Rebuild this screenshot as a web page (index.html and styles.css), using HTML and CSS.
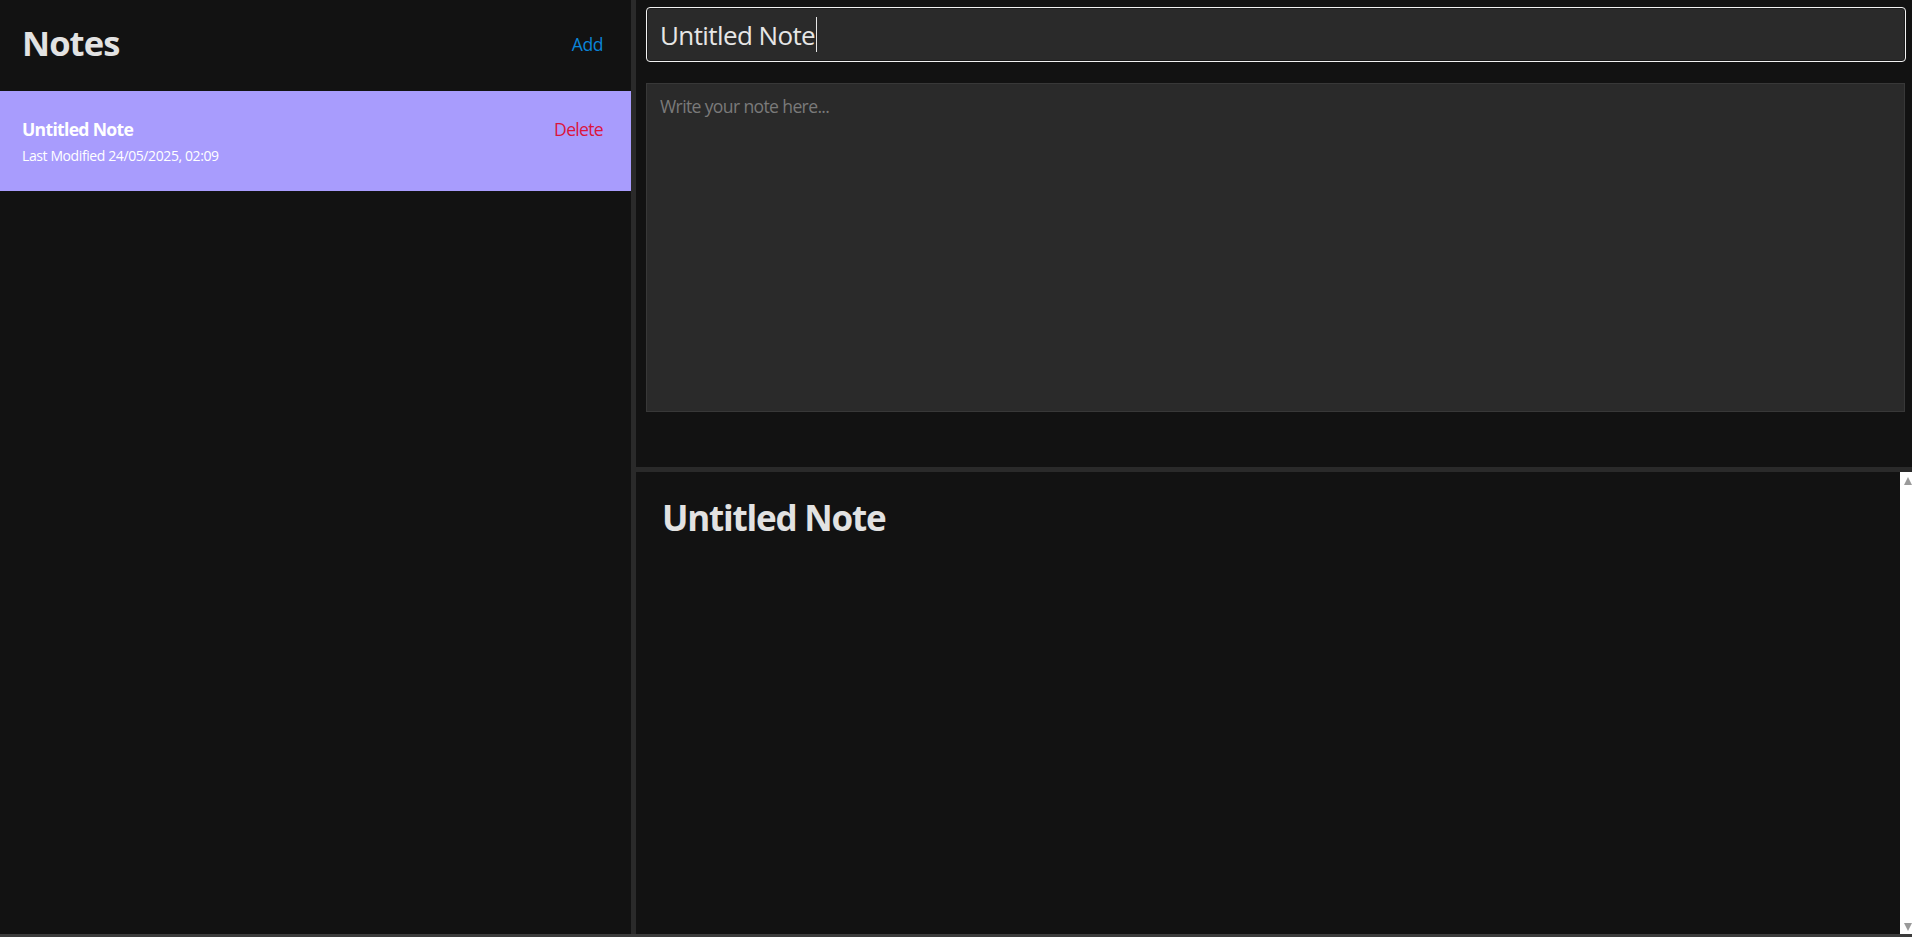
FILE: index.html
```html
<!DOCTYPE html>
<html lang="en">
<head>
<meta charset="utf-8">
<title>Notes</title>
<link rel="stylesheet" href="styles.css">
</head>
<body>
<div class="app">
  <aside class="sidebar">
    <header class="sidebar-header">
      <h1 class="sidebar-title">Notes</h1>
      <button class="add-btn" type="button">Add</button>
    </header>
    <ul class="note-list">
      <li class="note-item active">
        <div class="note-info">
          <strong class="note-title">Untitled Note</strong>
          <small class="note-meta">Last Modified 24/05/2025, 02:09</small>
        </div>
        <button class="delete-btn" type="button">Delete</button>
      </li>
    </ul>
  </aside>
  <main class="main">
    <section class="editor">
      <div class="title-field" role="textbox" aria-label="Note title">Untitled Note<span class="caret"></span></div>
      <textarea class="body-field" placeholder="Write your note here..."></textarea>
    </section>
    <section class="preview">
      <div class="preview-content">
        <h1 class="preview-title">Untitled Note</h1>
      </div>
      <div class="scrollbar">
        <span class="arrow-up"></span>
        <span class="arrow-down"></span>
      </div>
    </section>
  </main>
</div>
</body>
</html>
```
FILE: styles.css
```css
* {
  box-sizing: border-box;
}

html,
body {
  margin: 0;
  height: 100%;
}

body {
  background: #121212;
  color: #e0e0e0;
  font-family: "Open Sans", "Noto Sans", sans-serif;
  overflow: hidden;
}

.app {
  display: flex;
  height: 100vh;
  border-bottom: 3px solid #3c3c3c;
}

/* Sidebar */
.sidebar {
  width: 636px;
  flex-shrink: 0;
  border-right: 5px solid #2a2a2a;
  display: flex;
  flex-direction: column;
}

.sidebar-header {
  height: 91px;
  display: flex;
  justify-content: space-between;
  align-items: flex-start;
  padding: 26px 28px 0 22px;
}

.sidebar-title {
  margin: 0;
  font-size: 34.5px;
  line-height: 34px;
  font-weight: 700;
  color: #e2e2e2;
  letter-spacing: -0.9px;
}

.add-btn,
.delete-btn {
  background: none;
  border: none;
  padding: 0;
  font-family: inherit;
  font-size: 17.6px;
  line-height: 22px;
  cursor: pointer;
  letter-spacing: -0.5px;
}

.add-btn {
  color: #0a84d8;
  margin-top: 7px;
}

.note-list {
  list-style: none;
  margin: 0;
  padding: 0;
}

.note-item {
  display: flex;
  justify-content: space-between;
  align-items: flex-start;
  padding: 27px 28px 26px 22px;
  height: 100px;
}

.note-item.active {
  background: #a89cfd;
}

.note-info {
  display: flex;
  flex-direction: column;
}

.note-title {
  font-size: 17.6px;
  line-height: 22px;
  font-weight: 700;
  color: #ffffff;
  letter-spacing: -0.7px;
}

.note-meta {
  margin-top: 7px;
  font-size: 14px;
  line-height: 18px;
  color: #ffffff;
  letter-spacing: -0.4px;
}

.delete-btn {
  color: #dc143c;
  letter-spacing: -0.7px;
}

/* Main */
.main {
  flex: 1;
  display: flex;
  flex-direction: column;
  min-width: 0;
}

.editor {
  height: 467px;
  flex-shrink: 0;
  display: flex;
  flex-direction: column;
  padding: 7px 6px 0 10px;
}

.title-field {
  height: 55px;
  display: flex;
  align-items: center;
  padding: 0 13px;
  background: #2a2a2a;
  border: 1px solid #f2f2f2;
  border-radius: 4px;
  box-shadow: inset 0 0 0 1px #1b1b1b;
  font-size: 26px;
  color: #e6e6e6;
  letter-spacing: -0.6px;
}

.caret {
  display: inline-block;
  width: 1px;
  height: 35px;
  margin-left: 1px;
  background: #e6e6e6;
}

.body-field {
  margin-top: 21px;
  margin-right: 1px;
  height: 329px;
  resize: none;
  background: #2a2a2a;
  border: 1px solid #383838;
  padding: 11px 13px;
  color: #e0e0e0;
  font-family: inherit;
  font-size: 17.6px;
  line-height: 1.3;
  letter-spacing: -0.65px;
  outline: none;
}

.body-field::placeholder {
  color: #7a7a7a;
}

.preview {
  flex: 1;
  display: flex;
  border-top: 5px solid #2a2a2a;
  min-height: 0;
}

.preview-content {
  flex: 1;
  padding: 25px 26px 0;
}

.preview-title {
  margin: 0;
  font-size: 35px;
  line-height: 42px;
  font-weight: 700;
  color: #e2e2e2;
  letter-spacing: -1.2px;
}

.scrollbar {
  width: 12px;
  background: #ffffff;
  display: flex;
  flex-direction: column;
  justify-content: space-between;
  align-items: flex-end;
  padding: 5px 0 3px;
}

.arrow-up,
.arrow-down {
  width: 0;
  height: 0;
  border-left: 4.5px solid transparent;
  border-right: 4.5px solid transparent;
}

.arrow-up {
  border-bottom: 8px solid #9a9a9a;
}

.arrow-down {
  border-top: 8px solid #9a9a9a;
}
```
